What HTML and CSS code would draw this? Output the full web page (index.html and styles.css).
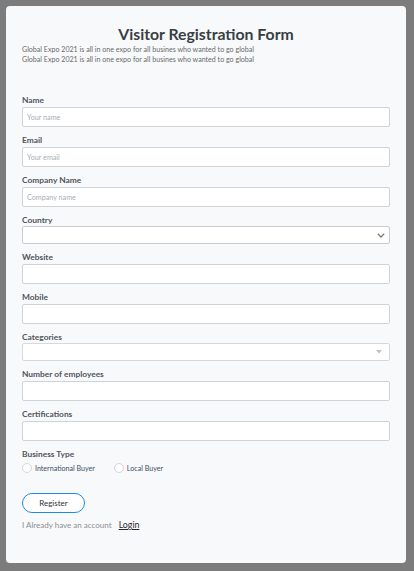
FILE: index.html
```html
<!DOCTYPE html>
<html lang="en">
<head>
<meta charset="utf-8">
<title>Visitor Registration Form</title>
<link rel="stylesheet" href="styles.css">
</head>
<body>
<main class="card">
  <header class="head">
    <h1 class="title">Visitor Registration Form</h1>
    <p class="intro">Global Expo 2021 is all in one expo for all busines who wanted to go global<br>Global Expo 2021 is all in one expo for all busines who wanted to go global</p>
  </header>
  <form class="form">
    <div class="group">
      <label class="label" for="name">Name</label>
      <input class="input" id="name" type="text" placeholder="Your name">
    </div>
    <div class="group">
      <label class="label" for="email">Email</label>
      <input class="input" id="email" type="email" placeholder="Your email">
    </div>
    <div class="group">
      <label class="label" for="company">Company Name</label>
      <input class="input" id="company" type="text" placeholder="Company name">
    </div>
    <div class="group group-select">
      <label class="label" for="country">Country</label>
      <div class="select-wrap">
        <select class="select" id="country"><option></option></select>
        <svg class="chevron" width="8" height="5" viewBox="0 0 8 5"><path d="M0.8 0.8 L4 4 L7.2 0.8" fill="none" stroke="#7a7a7a" stroke-width="1.3"/></svg>
      </div>
    </div>
    <div class="group">
      <label class="label" for="website">Website</label>
      <input class="input" id="website" type="text">
    </div>
    <div class="group">
      <label class="label" for="mobile">Mobile</label>
      <input class="input" id="mobile" type="text">
    </div>
    <div class="group group-select">
      <label class="label" for="categories">Categories</label>
      <div class="select-wrap">
        <select class="select select-light" id="categories"><option></option></select>
        <svg class="caret" width="6" height="4" viewBox="0 0 6 4"><path d="M0 0 L6 0 L3 3.5 Z" fill="#c2c2c2"/></svg>
      </div>
    </div>
    <div class="group">
      <label class="label" for="employees">Number of employees</label>
      <input class="input" id="employees" type="text">
    </div>
    <div class="group">
      <label class="label" for="certs">Certifications</label>
      <input class="input" id="certs" type="text">
    </div>
    <div class="group">
      <span class="label">Business Type</span>
      <div class="radios">
        <label class="radio"><input type="radio" name="btype" class="radio-input"><span>International Buyer</span></label>
        <label class="radio"><input type="radio" name="btype" class="radio-input"><span>Local Buyer</span></label>
      </div>
    </div>
    <button type="button" class="btn">Register</button>
    <p class="account">I Already have an account <a href="#" class="login">Login</a></p>
  </form>
</main>
</body>
</html>
```
FILE: styles.css
```css
* { box-sizing: border-box; }
html, body { margin: 0; }
body {
  background: #7b7c7b;
  padding: 6px;
  font-family: Lato, "Open Sans", sans-serif;
}
.card {
  width: 400px;
  height: 557px;
  background: #f8f9fb;
  border-radius: 4px;
  padding: 17px 16px 0;
}
.head { text-align: center; }
.title {
  margin: 0;
  font-size: 15.8px;
  line-height: 22px;
  font-weight: 700;
  color: #393e45;
}
.intro {
  margin: 0;
  text-align: left;
  font-size: 7.1px;
  line-height: 10px;
  color: #6a6a6a;
}
.form { margin-top: 29px; }
.group { margin-bottom: 7px; }
.label {
  display: block;
  font-size: 8.4px;
  line-height: 12px;
  font-weight: 700;
  color: #50555c;
  margin-bottom: 1px;
}
.group-select .label { margin-bottom: 0; }
.input {
  display: block;
  width: 100%;
  height: 20px;
  margin: 0;
  padding: 0 4px;
  border: 1px solid #cfd3d7;
  border-radius: 2px;
  background: #fff;
  font-family: Lato, sans-serif;
  font-size: 7.2px;
  color: #333;
  outline: none;
}
.input::placeholder { color: #a9aeb4; }
.select-wrap { position: relative; }
.select {
  display: block;
  width: 100%;
  height: 18px;
  margin: 0;
  padding: 0 4px;
  border: 1px solid #c9cdd1;
  border-radius: 2px;
  background: #fff;
  appearance: none;
  -webkit-appearance: none;
  outline: none;
}
.select-light { border-color: #d6d9dc; }
.chevron { position: absolute; right: 5px; top: 7px; }
.caret { position: absolute; right: 8px; top: 7px; }
.radios {
  display: flex;
  align-items: center;
  gap: 19px;
  margin-top: 2px;
  height: 12px;
}
.radio {
  display: flex;
  align-items: center;
  gap: 3px;
  font-size: 7.1px;
  color: #3a4f66;
}
.radio-input {
  appearance: none;
  -webkit-appearance: none;
  width: 10px;
  height: 10px;
  margin: 0;
  border: 1px solid #d3d6da;
  border-radius: 50%;
  background: #fff;
}
.btn {
  display: block;
  margin-top: 19px;
  width: 63px;
  height: 20px;
  padding: 0;
  border: 1.3px solid #1f8ae8;
  border-radius: 10px;
  background: #fff;
  font-family: Lato, sans-serif;
  font-size: 8px;
  color: #2f3338;
}
.account {
  margin: 6px 0 0;
  font-size: 8px;
  line-height: 12px;
  color: #8c8f93;
}
.login {
  margin-left: 5px;
  color: #26282b;
  text-decoration: underline;
  font-size: 8.8px;
}
```
